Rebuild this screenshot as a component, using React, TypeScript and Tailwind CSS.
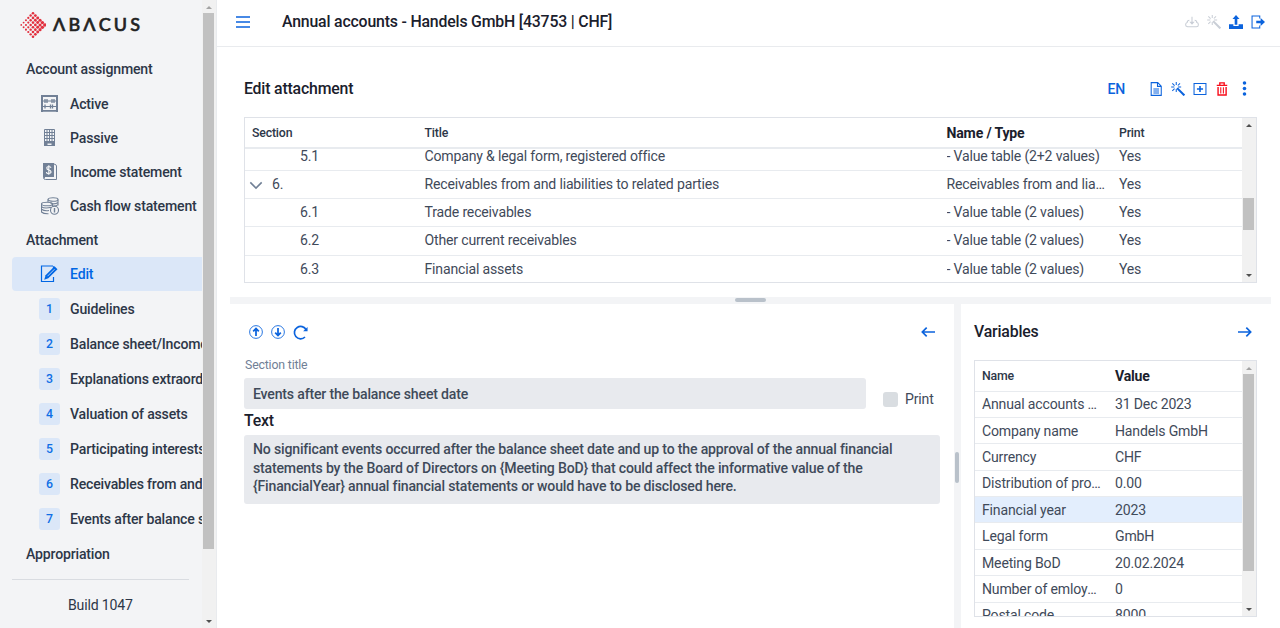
import type { ReactNode } from "react";

const accounts = ["Active", "Passive", "Income statement", "Cash flow statement"];

const chapters = [
  "Guidelines",
  "Balance sheet/Income",
  "Explanations extraordinary",
  "Valuation of assets",
  "Participating interests",
  "Receivables from and",
  "Events after balance sheet",
];

const sections = [
  { no: "5.1", title: "Company & legal form, registered office", type: "- Value table (2+2 values)" },
  { no: "6.", title: "Receivables from and liabilities to related parties", type: "Receivables from and liabilities", parent: true },
  { no: "6.1", title: "Trade receivables", type: "- Value table (2 values)" },
  { no: "6.2", title: "Other current receivables", type: "- Value table (2 values)" },
  { no: "6.3", title: "Financial assets", type: "- Value table (2 values)" },
];

const variables = [
  ["Annual accounts date", "31 Dec 2023"],
  ["Company name", "Handels GmbH"],
  ["Currency", "CHF"],
  ["Distribution of profit", "0.00"],
  ["Financial year", "2023"],
  ["Legal form", "GmbH"],
  ["Meeting BoD", "20.02.2024"],
  ["Number of emloyees", "0"],
  ["Postal code", "8000"],
];

function Icon({ children, className = "size-[14px]", box = 16 }: { children: ReactNode; className?: string; box?: number }) {
  return (
    <svg viewBox={`0 0 ${box} ${box}`} className={`shrink-0 ${className}`} fill="none" stroke="currentColor" strokeWidth="1.2">
      {children}
    </svg>
  );
}

function Logo() {
  const dots = [];
  for (let i = 0; i < 6; i++) {
    for (let j = 0; j < 6; j++) {
      dots.push(
        <circle key={`${i}-${j}`} cx={13 + (i - j) * 2.35} cy={2.2 + (i + j) * 2.35} r={1.3 + (i - j) * 0.09} />
      );
    }
  }
  return (
    <div className="flex items-center gap-[7px] pl-5">
      <svg viewBox="0 0 26 28" className="h-7 w-[26px]" fill="#e2303f">
        {dots}
      </svg>
      <div
        aria-label="ABACUS"
        className="flex w-[87px] justify-between pb-[2px] font-['Lato'] text-[18px] leading-6 tracking-normal text-[#222] [-webkit-text-stroke:0.6px_#222]"
      >
        {"ΛBΛCUS".split("").map((c, i) => (
          <span key={i}>{c}</span>
        ))}
      </div>
    </div>
  );
}

const accountIcons = [
  <Icon key="a" className="size-[17px]" box={17}>
    <path d="M1 0v17M16 0v17" strokeWidth="2" />
    <path d="M0 1h17M0 15.8h17" strokeWidth="1.8" />
    <path d="M2 6h13M2 11.5h13" strokeWidth="1" />
    <path d="M4 4v4M6 4v4M11 4v4M13 4v4M4 9.5v4M9.5 9.5v4M11.5 9.5v4" strokeWidth="1.3" />
  </Icon>,
  <Icon key="b" className="size-[17px]" box={17}>
    <path d="M3.500.5h10v16h-10zM6 .5v13M8.500 .5v13M11 .5v13M3.500 3.500h10M3.500 6.500h10M3.500 9.500h10M3.500 12.500h10" strokeWidth="1" />
    <path d="M3 13h11v4h-3.500v-2.500h-4V17H3z" fill="currentColor" stroke="none" />
  </Icon>,
  <Icon key="c" className="size-[17px]" box={17}>
    <path d="M2 0h11v14H4v1.500h0L2 14z" fill="currentColor" stroke="none" />
    <path d="M2.500 13v1.500q0 2 2 2H15.500V3q0-1.500-2.500-2" strokeWidth="1" />
    <path d="M10 4.800Q9.500 3.500 7.800 3.500 5.800 3.500 5.800 5T7.800 7 10 8.800 7.800 10.500 5.500 9M7.800 2.200v9.600" stroke="#f3f4f6" strokeWidth="1.2" />
  </Icon>,
  <Icon key="d" className="size-[18px]" box={18}>
    <g strokeWidth="1.100">
      <ellipse cx="12" cy="2.500" rx="5" ry="1.800" />
      <path d="M7 2.500v2.500M17 2.500v6M9.500 6.500q5 1 7.500-1M11 9q4 .5 6-1.300" />
      <ellipse cx="6" cy="7" rx="5.500" ry="1.800" />
      <path d="M.5 7v8q2 2 7 1.800M.5 9.700q3 2.300 10 .5M.5 12.300q3 2 7.500 1.200M11.500 7v2" />
      <circle cx="13.500" cy="13.300" r="4" fill="#f3f4f6" />
      <path d="M13.500 11v4.500" strokeWidth="1.400" />
    </g>
  </Icon>,
];

const magic = (
  <>
    <path d="M7 7l8.300 8.300" strokeWidth="2.400" />
    <path d="M6 0v3.500M6 8v3.500M.2 5.800h3.600M8 5.800h3.600M1.500 1.500l2.600 2.600M10.300 1.500L7.800 4M1.500 10.200l2.600-2.500" strokeWidth="1.200" />
  </>
);

function Scrollbar({ children, dimTop = false }: { children: ReactNode; dimTop?: boolean }) {
  return (
    <div className="flex w-[14px] shrink-0 flex-col bg-[#f1f1f1]">
      <div className="flex h-[13px] shrink-0 items-center justify-center pt-px">
        <svg viewBox="0 0 6 3" className={dimTop ? "h-[3px] w-[6px] text-[#a3a3a3]" : "h-[3px] w-[6px] text-[#505050]"}>
          <path d="M0 3L3 0l3 3z" fill="currentColor" />
        </svg>
      </div>
      <div className="flex min-h-0 flex-1 flex-col pr-[2px] pl-px">{children}</div>
      <div className="flex h-[13px] shrink-0 items-center justify-center">
        <svg viewBox="0 0 6 3" className="h-[3px] w-[6px] text-[#505050]">
          <path d="M0 0h6L3 3z" fill="currentColor" />
        </svg>
      </div>
    </div>
  );
}

function Sidebar() {
  return (
    <aside className="flex w-[217px] shrink-0 border-r border-[#e9ebee] bg-[#f3f4f6]">
      <div className="flex w-[202px] shrink-0 flex-col overflow-hidden font-medium whitespace-nowrap text-[#2d3748]">
        <div className="h-[52.300px] shrink-0 pt-[11px]">
          <Logo />
        </div>
        <div className="flex h-[34.200px] shrink-0 items-center pl-[26px]">Account assignment</div>
        {accounts.map((name, i) => (
          <div key={name} className="flex h-[34.200px] shrink-0 items-center pl-[40.500px]">
            <span className="flex w-[29.500px] text-[#718096]">{accountIcons[i]}</span>
            {name}
          </div>
        ))}
        <div className="flex h-[34px] shrink-0 items-center pl-[26px]">Attachment</div>
        <div className="ml-3 flex h-[34px] shrink-0 items-center rounded-l bg-[#dbe7f8] pl-[28px] text-[#0066e4]">
          <span className="w-[30px]">
            <Icon className="size-[18px]" box={18}>
              <path d="M13 1H1.500v15.500h12V12M13.500 1.200v2" strokeWidth="1.200" />
              <path d="M14.500 1.200l3 3-9.200 9-4.100 1.600 1.400-4.500z" fill="currentColor" stroke="none" />
              <path d="M7.500 11.200l7-7" stroke="#dbe7f8" strokeWidth=".8" />
            </Icon>
          </span>
          Edit
        </div>
        {chapters.map((name, i) => (
          <div key={name} className="flex h-[35.100px] shrink-0 items-center pl-[39px]">
            <span className="mr-[10px] flex h-[22px] w-[21px] shrink-0 items-center justify-center rounded-[3px] bg-[#dbe7f8] text-[12.300px] text-[#0f6fe6]">
              {i + 1}
            </span>
            {name}
          </div>
        ))}
        <div className="flex h-[34px] shrink-0 items-center pl-[26px]">Appropriation</div>
        <div className="mt-2 mr-[13px] ml-3 border-t border-[#d9dce1]" />
        <div className="mt-[15px] pl-[68px] font-normal">Build 1047</div>
      </div>
      <Scrollbar dimTop>
        <div className="h-[536px] bg-[#c1c1c1]" />
      </Scrollbar>
    </aside>
  );
}

function Header() {
  return (
    <header className="flex h-[47px] shrink-0 items-center border-b border-[#e9ebee] pr-[15px] pb-[2px] pl-[19px] text-[#0b63dd]">
      <Icon className="size-[14px]" box={14}>
        <path d="M0 2h14M0 7h14M0 12h14" strokeWidth="1.700" />
      </Icon>
      <h1 className="ml-8 flex-1 text-[15.840px] font-medium text-[#1a202c]">Annual accounts - Handels GmbH [43753 | CHF]</h1>
      <div className="flex items-center gap-2">
        <Icon className="size-[14px] text-[#c9ced6]">
          <path d="M5 6Q2.500 6 2.500 8.500.7 9 .7 11T3 13.500h10q2.300-.2 2.300-2.500T13.500 8.500Q13.500 6 11 6M8 2v8" />
          <path d="M5 7.800h6L8 11z" fill="currentColor" stroke="none" />
        </Icon>
        <Icon className="size-[14px] text-[#c9ced6]">{magic}</Icon>
        <Icon className="size-[14px]">
          <path d="M0 10.500h5v2h6v-2h5V16H0zM8 0l4 4.500H9.500V11h-3V4.500H4z" fill="currentColor" stroke="none" />
        </Icon>
        <Icon className="size-[14px]">
          <path d="M10 4V1.200H1.200v13.600H10V12" />
          <path d="M6 6.500h5v-3L16 8l-5 4.500v-3H6z" fill="currentColor" stroke="none" />
        </Icon>
      </div>
    </header>
  );
}

function AttachmentTable() {
  return (
    <div className="flex h-[166px] border border-[#dfe2e8]">
      <div className="flex min-w-0 flex-1 flex-col overflow-hidden">
        <div className="flex h-[31px] shrink-0 items-center border-b-2 border-[#e8ebef] pl-[7px] text-[12.320px] font-medium text-[#2d3748]">
          <span className="w-[172.500px]">Section</span>
          <span className="w-[522px]">Title</span>
          <span className="w-[172.500px] text-[14.080px] font-bold text-[#1a202c]">Name / Type</span>
          <span>Print</span>
        </div>
        <div className="-mt-[6px] min-h-0 flex-1 [clip-path:inset(6px_0_0_0)]">
          {sections.map((s) => (
            <div key={s.no} className="flex h-[28.150px] items-center border-b border-[#e8ebef] pb-px">
              <div className="flex w-[179.500px] shrink-0 items-center">
                {s.parent ? (
                  <>
                    <Icon className="mt-0.5 ml-[4px] size-[14px] text-[#718096]">
                      <path d="M1.500 5L8 11.500 14.500 5" strokeWidth="1.800" />
                    </Icon>
                    <span className="ml-[9px]">{s.no}</span>
                  </>
                ) : (
                  <span className="ml-[55px]">{s.no}</span>
                )}
              </div>
              <span className="w-[522px] shrink-0">{s.title}</span>
              <span className="mr-[12px] w-[160.500px] shrink-0 truncate">{s.type}</span>
              <span>Yes</span>
            </div>
          ))}
        </div>
      </div>
      <Scrollbar>
        <div className="mt-[67px] h-[32px] bg-[#c1c1c1]" />
      </Scrollbar>
    </div>
  );
}

function Editor() {
  return (
    <section className="w-[724px] shrink-0 pt-[20px] pr-[14px] pl-[14px]">
      <div className="flex h-4 items-center gap-2 pr-[5px] pl-[5px] text-[#0b63dd]">
        <Icon>
          <circle cx="8" cy="8" r="7.300" strokeWidth="1" />
          <path d="M8 12.500V4M4.800 7.200L8 4l3.200 3.200" strokeWidth="2" />
        </Icon>
        <Icon>
          <circle cx="8" cy="8" r="7.300" strokeWidth="1" />
          <path d="M8 3.500V12M4.800 8.800L8 12l3.200-3.200" strokeWidth="2" />
        </Icon>
        <Icon className="size-[15px]">
          <path d="M14 5.200A6.600 6.600 0 1 0 12.800 12.800" strokeWidth="1.800" />
          <path d="M15.500 2v4.700h-4.700z" fill="currentColor" stroke="none" />
        </Icon>
        <Icon className="ml-auto size-[14px]">
          <path d="M16 8H1.500M6.500 3L1.500 8l5 5" strokeWidth="1.900" />
        </Icon>
      </div>
      <div className="mt-[17px] pl-px text-[12.320px] leading-4 text-[#718096]">Section title</div>
      <div className="mt-[5px] flex items-center">
        <div className="flex h-[31px] w-[622px] items-center rounded-[3px] bg-[#e8eaee] px-[9px] font-medium">Events after the balance sheet date</div>
        <span className="mt-[11px] ml-[17px] size-[15px] rounded-[3px] bg-[#d9dde1]" />
        <span className="mt-[10px] ml-[7px]">Print</span>
      </div>
      <h3 className="mt-[2px] text-[15.840px] leading-5 font-medium text-[#1a202c]">Text</h3>
      <p className="mt-[4px] h-[69px] rounded-[3px] bg-[#e8eaee] px-[9px] pt-[5px] leading-[18.700px] font-medium whitespace-nowrap">
        No significant events occurred after the balance sheet date and up to the approval of the annual financial
        <br />
        statements by the Board of Directors on {"{Meeting BoD}"} that could affect the informative value of the
        <br />
        {"{FinancialYear}"} annual financial statements or would have to be disclosed here.
      </p>
    </section>
  );
}

function Variables() {
  return (
    <section className="flex-1 pt-[18px] pr-[14px] pl-[13px]">
      <div className="flex h-5 items-center justify-between pr-[5px]">
        <h2 className="text-[15.840px] font-medium text-[#1a202c]">Variables</h2>
        <Icon className="size-[14px] text-[#0b63dd]">
          <path d="M0 8h14.500M9.500 3l5 5-5 5" strokeWidth="1.900" />
        </Icon>
      </div>
      <div className="mt-[18px] flex h-[257px] border border-[#dfe2e8]">
        <div className="min-w-0 flex-1 overflow-hidden">
          <div className="flex h-[30.500px] items-center border-b border-[#e8ebef] pl-[7px] text-[12.320px] font-medium text-[#2d3748]">
            <span className="w-[133px]">Name</span>
            <span className="text-[14.080px] font-bold text-[#1a202c]">Value</span>
          </div>
          {variables.map(([name, value]) => (
            <div
              key={name}
              className={`flex h-[26.400px] items-center border-b border-[#e8ebef] pl-[7px] ${name === "Financial year" ? "bg-[#e3eefd]" : ""}`}
            >
              <span className="mr-[13px] w-[120px] shrink-0 truncate">{name}</span>
              <span>{value}</span>
            </div>
          ))}
        </div>
        <Scrollbar dimTop>
          <div className="h-[197px] bg-[#c1c1c1]" />
        </Scrollbar>
      </div>
    </section>
  );
}

export default function App() {
  return (
    <div className="flex h-[628px] w-[1280px] overflow-hidden bg-white font-['Roboto',sans-serif] text-[14.080px] leading-5 tracking-[-0.176px] text-[#3f4a5a]">
      <Sidebar />
      <div className="flex min-w-0 flex-1 flex-col">
        <Header />
        <div className="px-[27px] pr-[23px]">
          <div className="flex h-[70px] items-center gap-2 pt-[13px] pr-[5px]">
            <h2 className="flex-1 text-[15.840px] font-medium text-[#1a202c]">Edit attachment</h2>
            <div className="flex items-center gap-2 text-[#0b63dd]">
              <span className="mr-4 font-medium">EN</span>
              <Icon>
                <path d="M2.500.7h7.500L14 4.700v10.600H2.500zM9.700.7V5H14M5 8h6.500M5 10.300h6.500M5 12.600h6.500" />
              </Icon>
              <Icon className="size-[14px]">{magic}</Icon>
              <Icon>
                <path d="M1.200 1.700h13.600v12.600H1.200z" />
                <path d="M8 4.500v7M4.500 8h7" strokeWidth="1.800" />
              </Icon>
              <Icon className="size-[14px] text-[#f80d1b]">
                <path d="M2 3.800h12M5.500 3V1h5v2" strokeWidth="1.600" />
                <path d="M3.500 5.800v9h9.200v-9" strokeWidth="1.600" />
                <path d="M6.600 6v7M9.600 6v7" strokeWidth="1.200" />
              </Icon>
              <Icon className="size-[15px]">
                <g fill="currentColor" stroke="none">
                  <circle cx="8" cy="2.200" r="1.900" />
                  <circle cx="8" cy="8" r="1.900" />
                  <circle cx="8" cy="13.800" r="1.900" />
                </g>
              </Icon>
            </div>
          </div>
          <AttachmentTable />
        </div>
        <div className="mt-[14px] mr-[9px] ml-[13px] flex h-[7px] shrink-0 items-start justify-center bg-[#f3f4f6] pt-px">
          <span className="h-[4px] w-[31px] rounded-sm bg-[#b9c1ca]" />
        </div>
        <div className="mr-[9px] ml-[13px] flex min-h-0 flex-1">
          <Editor />
          <div className="flex w-[7px] shrink-0 justify-start bg-[#f3f4f6] pt-[148px] pl-px">
            <span className="h-[31px] w-[4px] rounded-sm bg-[#b9c1ca]" />
          </div>
          <Variables />
        </div>
      </div>
    </div>
  );
}
